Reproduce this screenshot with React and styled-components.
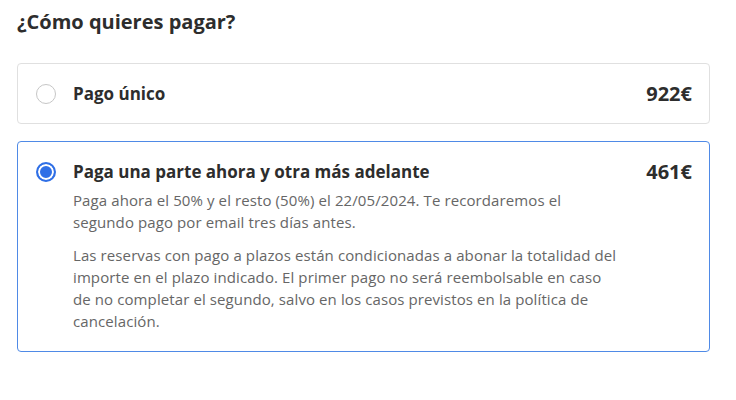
import React, {useState} from 'react'
import styled, {createGlobalStyle} from 'styled-components'

const GlobalStyle = createGlobalStyle`
    html, body {
        margin: 0;
        padding: 0;
        background: #ffffff;
    }
    body {
        font-family: 'Open Sans', 'Noto Sans', sans-serif;
        color: #2d2d2d;
    }
`

const options = [
    {id: 'single', title: 'Pago único', price: '922€'},
    {
        id: 'split',
        title: 'Paga una parte ahora y otra más adelante',
        price: '461€',
        details: [
            'Paga ahora el 50% y el resto (50%) el 22/05/2024. Te recordaremos el segundo pago por email tres días antes.',
            'Las reservas con pago a plazos están condicionadas a abonar la totalidad del importe en el plazo indicado. El primer pago no será reembolsable en caso de no completar el segundo, salvo en los casos previstos en la política de cancelación.'
        ]
    }
]

export default function App() {
    const [selected, setSelected] = useState('split')

    return (
        <>
            <GlobalStyle />
            <Page>
                <Title>¿Cómo quieres pagar?</Title>
                <List>
                    {options.map(option => {
                        const active = option.id === selected
                        return (
                            <Card key={option.id} $active={active} onClick={() => setSelected(option.id)}>
                                <Radio $active={active} />
                                <Body>
                                    <Header>
                                        <Label>{option.title}</Label>
                                        <Price>{option.price}</Price>
                                    </Header>
                                    {option.details &&
                                        <Details>
                                            {option.details.map((text, i) => (
                                                <Detail key={i}>{text}</Detail>
                                            ))}
                                        </Details>
                                    }
                                </Body>
                            </Card>
                        )
                    })}
                </List>
            </Page>
        </>
    )
}

const Page = styled.div`
    padding: 8px 26px 0 17px;
`

const Title = styled.h2`
    margin: 0 0 27px;
    font-size: 20px;
    line-height: 28px;
    font-weight: 700;
    color: #2d2d2d;
`

const List = styled.div`
    display: flex;
    flex-direction: column;
    gap: 17px;
`

const Card = styled.div`
    display: flex;
    align-items: flex-start;
    gap: 17px;
    padding: 16px 17px 16px 18px;
    border: 1px solid ${p => p.$active ? '#4f8ae6' : '#e0e0e0'};
    border-radius: 4px;
    cursor: pointer;
`

const Radio = styled.span`
    flex: none;
    box-sizing: border-box;
    width: 20px;
    height: 20px;
    margin-top: 3.5px;
    border-radius: 50%;
    border: ${p => p.$active ? '2px solid #2f6fe6' : '1.5px solid #c6c6c6'};
    background: ${p => p.$active ? '#2f6fe6' : '#fff'};
    box-shadow: ${p => p.$active ? 'inset 0 0 0 2px #fff' : 'none'};
`

const Body = styled.div`
    flex: 1;
    display: flex;
    flex-direction: column;
`

const Header = styled.div`
    display: flex;
    justify-content: space-between;
    align-items: center;
    height: 27px;
`

const Label = styled.span`
    font-size: 17px;
    line-height: 24px;
    font-weight: 700;
    color: #2d2d2d;
`

const Price = styled.span`
    font-size: 20px;
    line-height: 27px;
    font-weight: 700;
    color: #2d2d2d;
`

const Details = styled.div`
    display: flex;
    flex-direction: column;
    gap: 11px;
    margin-top: 4px;
    padding-bottom: 3px;
`

const Detail = styled.p`
    margin: 0;
    max-width: 547px;
    font-size: 15px;
    line-height: 22px;
    letter-spacing: 0.1px;
    color: #666;
`
